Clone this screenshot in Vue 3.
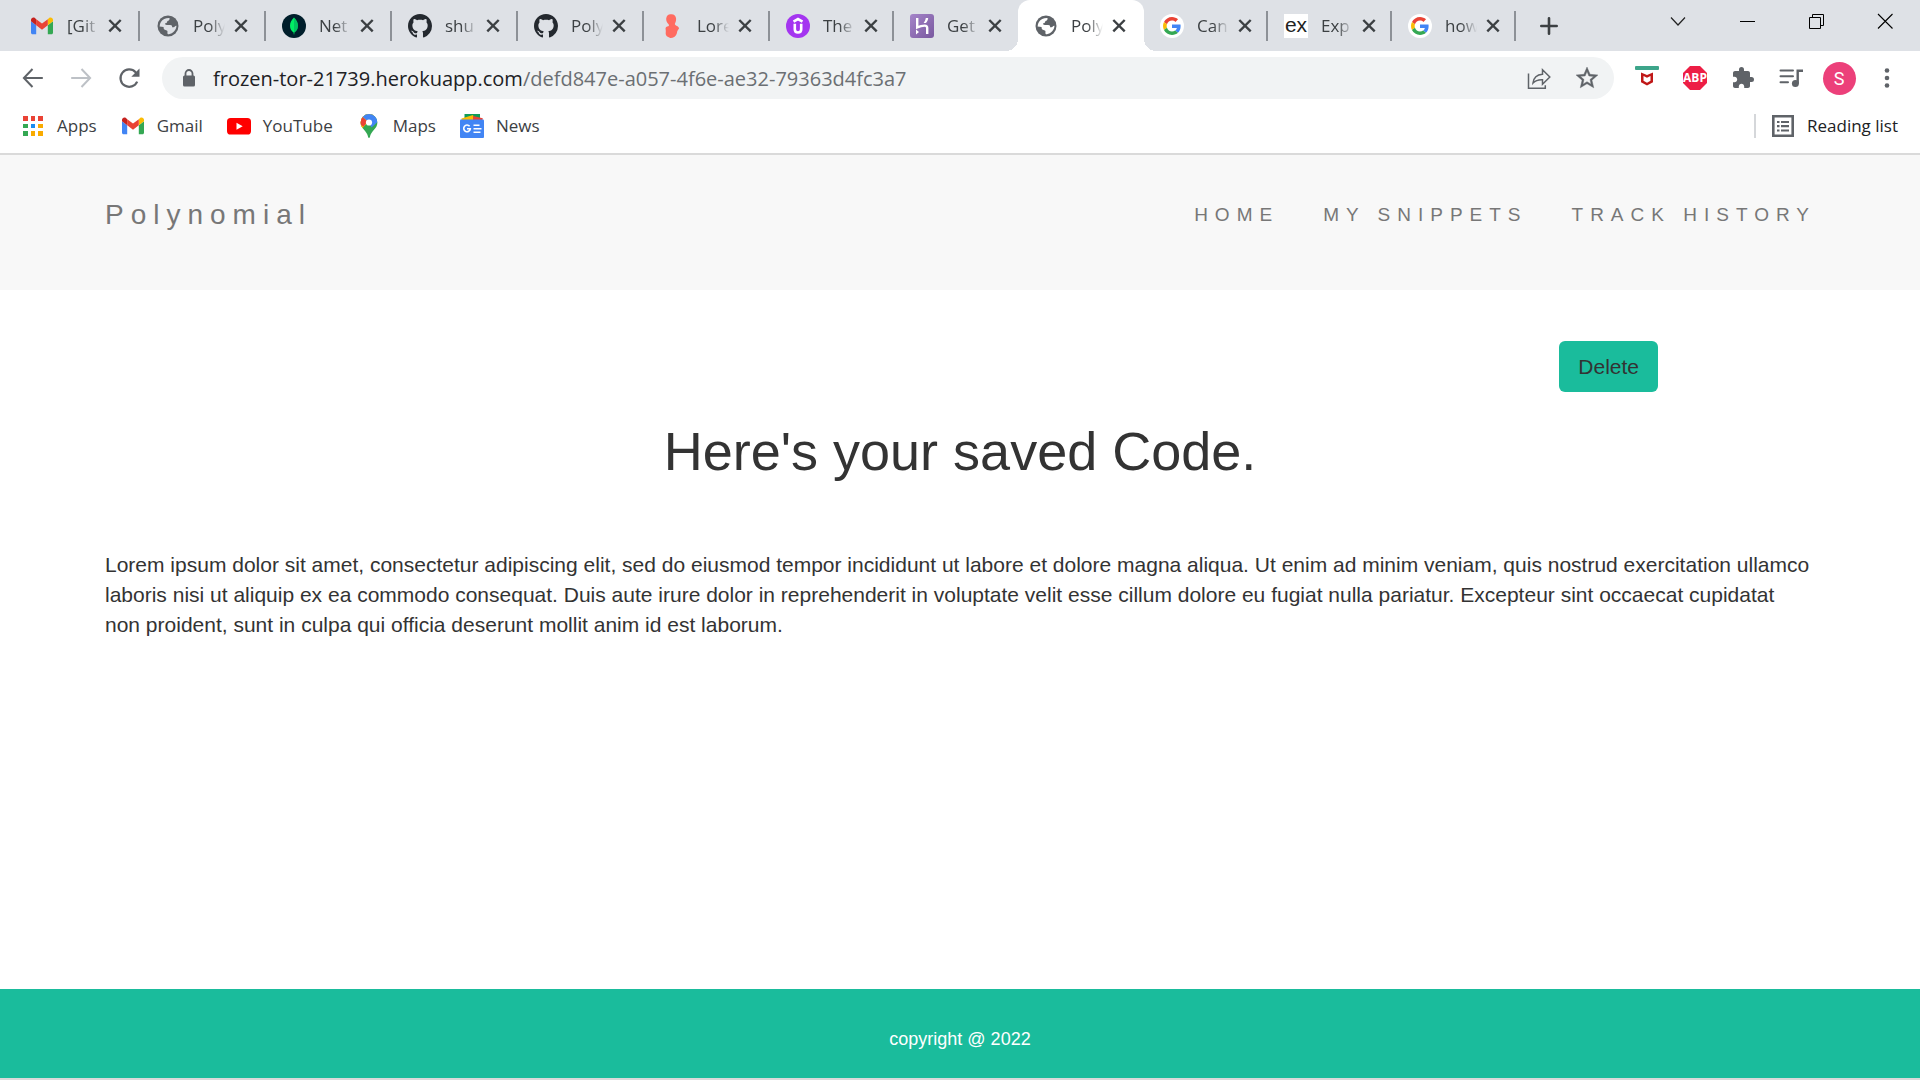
<script setup>
const tabs = [
  { icon: 'gmail', title: '[Git' },
  { icon: 'globe', title: 'Poly' },
  { icon: 'mongo', title: 'Net' },
  { icon: 'github', title: 'shu' },
  { icon: 'github', title: 'Poly' },
  { icon: 'lorem', title: 'Lore' },
  { icon: 'udemy', title: 'The', narrow: true },
  { icon: 'heroku', title: 'Get', narrow: true, last: true },
  { icon: 'globe', title: 'Poly', active: true },
  { icon: 'google', title: 'Can', narrow: true },
  { icon: 'express', title: 'Exp', narrow: true },
  { icon: 'google', title: 'how', narrow: true },
]

const bookmarks = [
  { icon: 'apps', label: 'Apps' },
  { icon: 'gmail', label: 'Gmail' },
  { icon: 'youtube', label: 'YouTube' },
  { icon: 'maps', label: 'Maps' },
  { icon: 'news', label: 'News' },
]

const windowControls = [
  { icon: 'chevron', label: 'Search tabs' },
  { icon: 'minimize', label: 'Minimize' },
  { icon: 'restore', label: 'Restore' },
  { icon: 'quit', label: 'Close window' },
]

const extensions = [
  { icon: 'mcafee', label: 'WebAdvisor' },
  { icon: 'abp', label: 'Adblock Plus' },
  { icon: 'puzzle', label: 'Extensions' },
  { icon: 'queue', label: 'Media controls' },
]

const links = ['HOME', 'MY SNIPPETS', 'TRACK HISTORY']
</script>

<template>
  <div class="window">
    <svg class="sprite" aria-hidden="true">
      <symbol id="gmail" viewBox="0 0 24 24">
        <path fill="#4285f4" d="M2.500 20.300h3.700v-9L1 7.300v11.500c0 .8.700 1.500 1.500 1.500z" />
        <path fill="#34a853" d="M17.800 20.300h3.700c.8 0 1.500-.7 1.500-1.500V7.300l-5.200 4z" />
        <path fill="#fbbc04" d="M17.800 5.200v6.100L23 7.300V5.800c0-2-2.300-3.100-3.900-1.900z" />
        <path fill="#ea4335" d="M6.200 11.300V5.200l5.800 4.400 5.800-4.400v6.100L12 15.700z" />
        <path fill="#c5221f" d="M1 5.800v1.500l5.200 4V5.200L4.900 3.900C3.300 2.700 1 3.800 1 5.800z" />
      </symbol>
      <symbol id="globe" viewBox="0 0 24 24">
        <circle cx="12" cy="12" r="10.500" fill="#5f6368" />
        <path class="land" d="M3.600 12.500c.2-3.200 1.800-5.900 4.600-7.400 1.500-.9 3.400-1.300 5.300-1.200.3 1.700-.5 2.700-2.100 3-.2 1.500-.9 2.300-2.300 2.400-.2 1.300.4 1.700 1.700 1.700h3.400c1.500 0 2.100.9 1.900 2.300 1.300.2 2.300 0 2.900-1 .5-.7.900-.8 1.500-.5-.2 3.900-3.300 7.800-7.600 8.500-1.300-.1-1.800-.9-1.400-2.400.1-1.100-.4-1.600-1.400-1.700-1.900-.2-2.700-1.200-2.500-3.100-1.400-.4-2.700-.6-4-.6z" />
      </symbol>
      <symbol id="mongo" viewBox="0 0 24 24">
        <circle cx="12" cy="12" r="12" fill="#001e2b" />
        <path fill="#00ed64" d="M12 3.500c2.700 2.600 4 5 4 8.300 0 3.100-1.400 5.100-3.600 6.700l-.2 1.900h-.4l-.2-1.900C9.400 16.900 8 14.900 8 11.800c0-3.300 1.300-5.700 4-8.300z" />
        <path fill="#00a35c" d="M12 4.500v14c2.600-1.600 4-3.600 4-6.700 0-3-1.300-5-4-7.300z" opacity=".55" />
      </symbol>
      <symbol id="github" viewBox="0 0 16 16">
        <path fill="#24292f" d="M8 0C3.580 0 0 3.580 0 8c0 3.540 2.290 6.530 5.470 7.590.4.070.55-.17.550-.38 0-.19-.01-.82-.01-1.490-2.010.370-2.530-.490-2.690-.940-.09-.23-.48-.94-.82-1.130-.28-.15-.68-.52-.01-.53.630-.01 1.080.580 1.230.820.720 1.210 1.870.870 2.330.660.070-.52.280-.87.510-1.070-1.780-.2-3.640-.89-3.640-3.950 0-.87.310-1.590.820-2.150-.08-.2-.36-1.020.080-2.120 0 0 .67-.21 2.200.820.640-.18 1.320-.27 2-.27.680 0 1.360.090 2 .27 1.530-1.040 2.200-.82 2.200-.82.440 1.100.160 1.920.080 2.120.510.560.820 1.270.820 2.150 0 3.070-1.870 3.750-3.650 3.950.290.250.540.730.540 1.480 0 1.070-.01 1.930-.01 2.200 0 .21.150.460.550.380A8.010 8.010 0 0 0 16 8c0-4.420-3.580-8-8-8z" />
      </symbol>
      <symbol id="lorem" viewBox="0 0 24 24">
        <path fill="#ff6b60" d="M10.500.3c3.200-.5 5.600 1.500 5.600 4.700 0 2-.6 3.600-1.300 4.900.3 1.200 1.300 1.700 2.300 2.200 1 .5 1.500 1.300 2 2.200-.8 1.300-1.500 2-1.900 3.300-.3 2.500-1.400 5.300-4.600 6.200-1.300.3-2.400.2-3.400-.4-2.500-.6-3.700-2-3.500-4.300.1-1.500.2-2.500-.1-3.900-.3-1.800.7-2.700 2.700-2.900.9-.5.900-1.500.1-2.400C6.700 8.300 5.900 6.300 6.300 4 6.700 1.800 8.200.5 10.500.3z" />
      </symbol>
      <symbol id="udemy" viewBox="0 0 24 24">
        <circle cx="12" cy="12" r="12" fill="#a435f0" />
        <path fill="none" stroke="#fff" stroke-width="2.600" d="M7.500 7.600 12 5l4.500 2.600M8.800 9.800v5.400c0 4.400 6.400 4.400 6.400 0V9.800" />
      </symbol>
      <linearGradient id="heroku-fill" x1="0" y1="0" x2="1" y2="1">
        <stop offset="0" stop-color="#a585c9" />
        <stop offset="1" stop-color="#79589f" />
      </linearGradient>
      <symbol id="heroku" viewBox="0 0 24 24">
        <rect width="24" height="24" rx="3" fill="url(#heroku-fill)" />
        <path fill="none" stroke="#fff" stroke-width="2.400" d="M7.200 4v9.300c2.300-1 5-1.700 7.500-1.700 1.800 0 2.500.9 2.500 2.400v6" />
        <path fill="#fff" d="M6 15.400 9 18l-3 2.600zM15.800 4h2.400c-.2 2-1 3.600-2.300 5h-2.300c1.200-1.600 2-3.200 2.200-5z" />
      </symbol>
      <symbol id="google" viewBox="0 0 64 64">
        <circle cx="32" cy="32" r="32" fill="#fff" />
        <g transform="translate(8 8)">
          <path fill="#ea4335" d="M24 9.500c3.540 0 6.710 1.220 9.210 3.600l6.850-6.850C35.900 2.380 30.470 0 24 0 14.620 0 6.510 5.380 2.560 13.220l7.980 6.190C12.430 13.720 17.740 9.500 24 9.500z" />
          <path fill="#4285f4" d="M46.980 24.550c0-1.570-.15-3.090-.38-4.550H24v9.020h12.940c-.58 2.960-2.260 5.480-4.780 7.180l7.730 6c4.510-4.180 7.090-10.360 7.090-17.650z" />
          <path fill="#fbbc05" d="M10.530 28.590A14.500 14.500 0 0 1 9.770 24c0-1.600.27-3.140.760-4.590l-7.980-6.190A23.900 23.900 0 0 0 0 24c0 3.880.920 7.540 2.560 10.780z" />
          <path fill="#34a853" d="M24 48c6.480 0 11.930-2.130 15.890-5.810l-7.730-6C30 37.650 27.240 38.490 24 38.490c-6.260 0-11.570-4.220-13.470-9.910l-7.980 6.190C6.510 42.620 14.620 48 24 48z" />
        </g>
      </symbol>
      <symbol id="close" viewBox="0 0 24 24">
        <path fill="none" stroke="#3c4043" stroke-width="2.400" d="m6.300 6 11.400 11.400M17.700 6 6.300 17.400" />
      </symbol>
      <symbol id="plus" viewBox="0 0 24 24">
        <path fill="none" stroke="#3c4043" stroke-width="2.600" stroke-linecap="round" d="M12 4.300v15.400M4.300 12h15.400" />
      </symbol>
      <symbol id="chevron" viewBox="0 0 24 24">
        <path fill="none" stroke="#222" stroke-width="1.200" d="m5 8.500 7 7.500 7-7.500" />
      </symbol>
      <symbol id="minimize" viewBox="0 0 24 24">
        <path fill="none" stroke="#000" d="M5 12.500h15" />
      </symbol>
      <symbol id="restore" viewBox="0 0 24 24">
        <path fill="none" stroke="#000" d="M5.500 8.500h11v11h-11zM8.500 8.500v-3h11v11h-3" />
      </symbol>
      <symbol id="quit" viewBox="0 0 24 24">
        <path fill="none" stroke="#000" stroke-width="1.100" d="m5 5 14.500 14.500M19.500 5 5 19.500" />
      </symbol>
      <symbol id="back" viewBox="0 0 24 24">
        <path fill="none" stroke="#5f6368" stroke-width="2" d="M21.800 12H3.500M11.500 3 2.900 12l8.600 9" />
      </symbol>
      <symbol id="forward" viewBox="0 0 24 24">
        <path fill="none" stroke="#bdc1c6" stroke-width="2" d="M2.200 12h18.300M12.500 3l8.600 9-8.600 9" />
      </symbol>
      <symbol id="reload" viewBox="0 0 24 24">
        <path fill="none" stroke="#5f6368" stroke-width="2.200" d="M20.200 15.600A8.700 8.700 0 1 1 18.600 6.200L20.500 8" />
        <path fill="#5f6368" d="M22.500 2.500v8.200h-8.200z" />
      </symbol>
      <symbol id="lock" viewBox="0 0 24 24">
        <rect x="6" y="9.500" width="12" height="11" rx="1.500" fill="#5f6368" />
        <path fill="none" stroke="#5f6368" stroke-width="1.800" d="M8.500 10V7.500a3.500 3.500 0 0 1 7 0V10" />
      </symbol>
      <symbol id="share" viewBox="0 0 24 24">
        <path fill="none" stroke="#5f6368" stroke-width="1.500" d="M1.500 7.500v14.700h16.800v-3M6 17c.6-5 4-8.300 9.500-8.700V3.800l7.300 7.200-7.300 7.200v-4.500C11 13.500 8.300 14.500 6 17z" />
      </symbol>
      <symbol id="star" viewBox="1 1 22 22">
        <path fill="#5f6368" stroke="#5f6368" stroke-width=".4" d="m22 9.240-7.190-.62L12 2 9.190 8.630 2 9.240l5.460 4.730L5.820 21 12 17.270 18.180 21l-1.630-7.030zM12 15.400l-3.760 2.270 1-4.280-3.320-2.880 4.380-.38L12 6.100l1.710 4.040 4.380.380-3.320 2.880 1 4.280z" />
      </symbol>
      <symbol id="mcafee" viewBox="0 0 24 24">
        <rect width="24" height="4" rx="1" fill="#3da58a" />
        <path fill="#c01818" d="m6 6.500 6 2.600 6-2.600v9.800L12 19.500l-6-3.200z" />
        <path fill="#fff" d="m8.500 10 3.500 1.700 3.500-1.700v4.700L12 16.700l-3.500-2z" />
      </symbol>
      <symbol id="abp" viewBox="0 0 24 24">
        <path fill="#ed1e45" d="M7 0h10l7 7v10l-7 7H7l-7-7V7z" />
      </symbol>
      <symbol id="puzzle" viewBox="0 0 24 24">
        <path fill="#5f6368" d="M20.500 11H19V7c0-1.100-.9-2-2-2h-4V3.500a2.500 2.500 0 0 0-5 0V5H4c-1.100 0-1.990.9-1.990 2v3.800H3.500c1.490 0 2.700 1.210 2.700 2.700s-1.210 2.700-2.700 2.700H2V20c0 1.100.9 2 2 2h3.800v-1.500c0-1.490 1.210-2.700 2.700-2.700s2.700 1.210 2.700 2.700V22H17c1.100 0 2-.9 2-2v-4h1.500a2.500 2.500 0 0 0 0-5z" />
      </symbol>
      <symbol id="queue" viewBox="0 0 24 24">
        <path fill="none" stroke="#5f6368" stroke-width="2" stroke-linecap="round" d="M1.500 4.500h12.500M1.500 10.300h12.500M1.500 16.200h7.500" />
        <path fill="none" stroke="#5f6368" stroke-width="2.400" d="M18.700 17.500V4.700H24" />
        <circle cx="16.400" cy="17.600" r="3.500" fill="#5f6368" />
      </symbol>
      <symbol id="more" viewBox="0 0 24 24">
        <g fill="#5f6368">
          <circle cx="12" cy="4.500" r="2.300" /><circle cx="12" cy="12" r="2.300" /><circle cx="12" cy="19.500" r="2.300" />
        </g>
      </symbol>
      <symbol id="apps" viewBox="0 0 24 24">
        <path fill="#ea4335" d="M2 2h5v5H2zM10 2h4v5h-4zM17 2h5v5h-5z" />
        <path fill="#34a853" d="M2 10h5v4H2zM2 17h5v5H2z" />
        <path fill="#1a8cf0" d="M10 10h4v4h-4z" />
        <path fill="#f9ab00" d="M17 10h5v4h-5zM10 17h4v5h-4zM17 17h5v5h-5z" />
      </symbol>
      <symbol id="youtube" viewBox="0 0 24 24">
        <rect y="4" width="24" height="16.500" rx="3.600" fill="#f00" />
        <path fill="#fff" d="M9.500 8.700v7l6.200-3.500z" />
      </symbol>
      <symbol id="maps" viewBox="0 0 24 24">
        <clipPath id="pin"><path d="M12 0a8.400 8.400 0 0 0-8.400 8.400c0 3 1.400 5 3.200 7.200 2 2.400 3.700 4.400 4.300 7.400.3 1.300 1.500 1.300 1.800 0 .6-3 2.300-5 4.300-7.400 1.800-2.200 3.200-4.200 3.200-7.200A8.400 8.400 0 0 0 12 0z" /></clipPath>
        <g clip-path="url(#pin)">
          <path fill="#34a853" d="M0 0h24v24H0z" />
          <path fill="#fbbc04" d="M0 20 18.500 0H0z" />
          <path fill="#4285f4" d="M5 2.500 12 8.500 19.500 5.500 18 0H5z" />
          <path fill="#4285f4" d="m12 9 7.500-6 1 5-6 5.500z" />
          <path fill="#ea4335" d="M0 0h5.500v3l5 4.500-4 5.300L0 8z" />
        </g>
        <circle cx="12" cy="8.500" r="3.100" fill="#fff" />
      </symbol>
      <symbol id="news" viewBox="0 0 24 24">
        <path fill="#0f9d58" d="M4.500 0h15.500v8h-15.500z" />
        <path fill="#fbbc04" d="M1.500 4.500 13 1l2 6H1.500z" />
        <path fill="#ea4335" d="m13 2 9.800 2.300L22 8h-9z" />
        <rect y="5.500" width="24" height="18.500" rx="1" fill="#4285f4" />
        <path fill="none" stroke="#fff" stroke-width="1.600" d="M9.600 12.300a3.300 3.300 0 1 0 .7 2.500H7M13.500 11.300h6M13.500 14.800h8M13.500 18.200h7" />
      </symbol>
      <symbol id="list" viewBox="0 0 24 24">
        <path fill="none" stroke="#5f6368" stroke-width="2.600" d="M2.300 2.300h19.400v19.400H2.300z" />
        <path fill="none" stroke="#5f6368" stroke-width="2.200" d="M6 8h2.500M10 8h8M6 12.200h2.500M10 12.200h8M6 16.500h2.500M10 16.500h8" />
      </symbol>
    </svg>

    <header class="chrome">
      <div class="tab-strip">
        <div
          v-for="(tab, i) in tabs"
          :key="i"
          class="tab"
          :class="{ narrow: tab.narrow, active: tab.active, plain: tab.last }"
        >
          <span v-if="tab.icon === 'express'" class="express">ex</span>
          <svg v-else class="icon"><use :href="'#' + tab.icon" /></svg>
          <button class="tab-title" type="button">{{ tab.title }}</button>
          <button class="bare" type="button" aria-label="Close tab">
            <svg class="icon"><use href="#close" /></svg>
          </button>
        </div>
        <button class="bare new-tab" type="button" aria-label="New tab">
          <svg class="icon"><use href="#plus" /></svg>
        </button>
        <div class="window-controls">
          <button v-for="c in windowControls" :key="c.icon" class="bare" type="button" :aria-label="c.label">
            <svg class="icon"><use :href="'#' + c.icon" /></svg>
          </button>
        </div>
      </div>

      <div class="toolbar">
        <button class="bare tool" type="button" aria-label="Back"><svg class="icon"><use href="#back" /></svg></button>
        <button class="bare tool" type="button" aria-label="Forward"><svg class="icon"><use href="#forward" /></svg></button>
        <button class="bare tool" type="button" aria-label="Reload"><svg class="icon"><use href="#reload" /></svg></button>
        <div class="omnibox">
          <svg class="icon"><use href="#lock" /></svg>
          <div class="url" role="textbox" aria-label="Address" tabindex="0">frozen-tor-21739.herokuapp.com<span class="path">/defd847e-a057-4f6e-ae32-79363d4fc3a7</span></div>
          <button class="bare tool" type="button" aria-label="Share"><svg class="icon"><use href="#share" /></svg></button>
          <button class="bare tool" type="button" aria-label="Bookmark"><svg class="icon"><use href="#star" /></svg></button>
        </div>
        <button v-for="e in extensions" :key="e.icon" class="bare tool" type="button" :aria-label="e.label">
          <svg class="icon"><use :href="'#' + e.icon" /></svg>
          <span v-if="e.icon === 'abp'" class="abp-text">ABP</span>
        </button>
        <button class="bare tool" type="button" aria-label="Profile"><span class="avatar">S</span></button>
        <button class="bare tool" type="button" aria-label="Menu"><svg class="icon"><use href="#more" /></svg></button>
      </div>

      <nav class="bookmarks" aria-label="Bookmarks">
        <a v-for="b in bookmarks" :key="b.label" href="#" class="bookmark">
          <svg class="icon"><use :href="'#' + b.icon" /></svg>{{ b.label }}
        </a>
        <button class="bare reading-list" type="button">
          <svg class="icon"><use href="#list" /></svg>Reading list
        </button>
      </nav>
    </header>

    <div class="page">
      <nav class="navbar">
        <a href="#" class="brand">Polynomial</a>
        <ul class="links">
          <li v-for="link in links" :key="link"><a href="#">{{ link }}</a></li>
        </ul>
      </nav>

      <main class="content">
        <button class="delete" type="button">Delete</button>
        <h1>Here's your saved Code.</h1>
        <p>
          Lorem ipsum dolor sit amet, consectetur adipiscing elit, sed do eiusmod tempor incididunt ut labore et dolore
          magna aliqua. Ut enim ad minim veniam, quis nostrud exercitation ullamco laboris nisi ut aliquip ex ea commodo
          consequat. Duis aute irure dolor in reprehenderit in voluptate velit esse cillum dolore eu fugiat nulla
          pariatur. Excepteur sint occaecat cupidatat non proident, sunt in culpa qui officia deserunt mollit anim id
          est laborum.
        </p>
      </main>

      <footer class="footer">copyright @ 2022</footer>
    </div>
  </div>
</template>

<style>
body {
  margin: 0;
  background: #fff;
}
</style>

<style scoped>
* {
  box-sizing: border-box;
}

.window {
  display: flex;
  flex-direction: column;
  min-height: 100vh;
  border-bottom: 2px solid #dadada;
}

.sprite {
  position: absolute;
  width: 0;
  height: 0;
}

.icon {
  display: block;
  flex: none;
  width: 24px;
  height: 24px;
}

.bare {
  display: flex;
  align-items: center;
  justify-content: center;
  padding: 0;
  border: 0;
  background: none;
  color: inherit;
  font: inherit;
}

.chrome {
  border-bottom: 2px solid #dadada;
  color: #3c4043;
  font: 17px/24px "Open Sans", "Noto Sans", sans-serif;
}

/* Tab strip */
.tab-strip {
  display: flex;
  height: 51px;
  padding-left: 14px;
  background: #dee1e6;
}

.tab {
  position: relative;
  display: flex;
  align-items: center;
  flex: none;
  width: 126px;
  padding-left: 16px;
  fill: #dee1e6;
}

.tab.narrow {
  width: 124px;
}

.tab::after {
  content: "";
  width: 2px;
  height: 30px;
  margin-left: auto;
  background: #8d9197;
}

.tab.plain::after,
.tab.active::after {
  display: none;
}

.tab.active {
  border-radius: 12px 12px 0 0;
  background: #fff;
  fill: #fff;
}

.tab.active::before {
  content: "";
  position: absolute;
  right: -12px;
  bottom: 0;
  left: -12px;
  height: 12px;
  background:
    radial-gradient(circle at 0 0, transparent 12px, #fff 12px) left / 12px 12px no-repeat,
    radial-gradient(circle at 100% 0, transparent 12px, #fff 12px) right / 12px 12px no-repeat;
}

.tab-title {
  width: 36px;
  margin-left: 13px;
  padding: 0;
  border: 0;
  background: none;
  color: #3c4043;
  font: inherit;
  text-align: left;
  white-space: nowrap;
  mask-image: linear-gradient(to right, #000 16px, transparent 32px);
}

.express {
  width: 24px;
  height: 24px;
  background: #fff;
  color: #222;
  font: 21px/22px "Liberation Sans", Arial, sans-serif;
  text-align: center;
}

.new-tab {
  width: 66px;
}

.window-controls {
  display: flex;
  height: 42px;
  margin-left: auto;
  padding-right: 1px;
}

.window-controls .bare {
  width: 69px;
}

/* Toolbar */
.toolbar {
  display: flex;
  align-items: center;
  height: 54px;
  padding: 0 9px;
}

.tool {
  position: relative;
  flex: none;
  width: 48px;
  height: 42px;
}

.omnibox {
  display: flex;
  align-items: center;
  flex: 1;
  height: 42px;
  margin: 0 9px;
  padding: 0 3px 0 15px;
  border-radius: 21px;
  background: #f1f3f4;
}

.url {
  flex: 1;
  margin-left: 12px;
  padding-top: 2px;
  color: #202124;
  font-size: 20px;
  white-space: nowrap;
}

.path {
  color: #6b6f73;
}

.abp-text {
  position: absolute;
  color: #fff;
  font-size: 12px;
  font-weight: 700;
}

.avatar {
  width: 33px;
  height: 33px;
  border-radius: 50%;
  background: #ec407a;
  color: #fff;
  font: 18px/33px Roboto, sans-serif;
}

/* Bookmarks bar */
.bookmarks {
  display: flex;
  align-items: center;
  gap: 24px;
  height: 48px;
  padding: 0 22px 6px 21px;
}

.bookmark {
  display: flex;
  gap: 12px;
  color: inherit;
  text-decoration: none;
}

.reading-list {
  gap: 12px;
  margin-left: auto;
  padding-left: 15px;
  border-left: 2px solid #d5d7da;
  color: #202124;
}

/* Web page */
.page {
  display: flex;
  flex: 1;
  flex-direction: column;
  color: #333;
  font: 21px/30px "Liberation Sans", Arial, sans-serif;
}

.navbar {
  display: flex;
  justify-content: space-between;
  padding: 45px 104px 60px 105px;
  background: #f8f8f8;
}

.navbar a {
  color: #777;
  text-decoration: none;
}

.brand {
  font-size: 28px;
  letter-spacing: 7px;
}

.links {
  display: flex;
  gap: 44px;
  margin: 0;
  padding: 0;
  font-size: 19px;
  letter-spacing: 7px;
  list-style: none;
}

.content {
  display: flex;
  flex: 1;
  flex-direction: column;
  padding: 51px 105px 30px;
}

.delete {
  align-self: flex-end;
  height: 51px;
  margin-right: 157px;
  padding: 0 19px;
  border: 0;
  border-radius: 6px;
  background: #1abc9c;
  color: #333;
  font: inherit;
}

h1 {
  margin: 29px 0 69px;
  font-size: 54px;
  font-weight: 400;
  line-height: 60px;
  text-align: center;
}

p {
  margin: 0;
}

.footer {
  padding: 35px 0 24px;
  background: #1abc9c;
  color: #fff;
  font-size: 18px;
  text-align: center;
}
</style>
